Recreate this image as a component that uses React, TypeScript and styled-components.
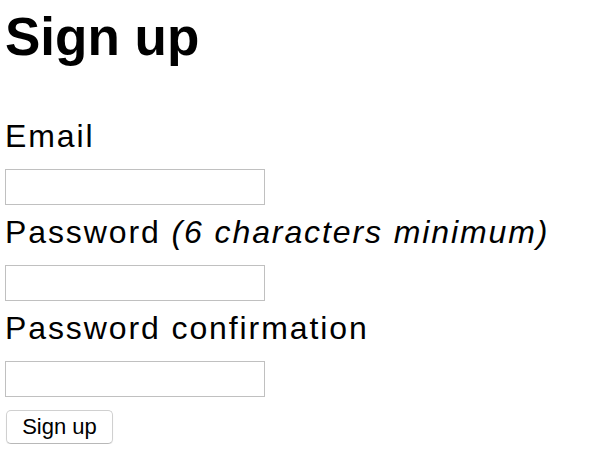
import React from "react";
import styled, { createGlobalStyle } from "styled-components";

const Global = createGlobalStyle`
  html, body { margin: 0; padding: 0; background: #fff; }
  body { font-family: "Liberation Sans", Arial, sans-serif; color: #000; }
`;

const Page = styled.div`
  padding: 10px 0 0 5px;
  display: flex;
  flex-direction: column;
  align-items: flex-start;
`;

const Title = styled.h1`
  margin: 0;
  font-size: 53px;
  line-height: 53px;
  font-weight: bold;
`;

const Form = styled.form`
  margin-top: 53px;
  display: flex;
  flex-direction: column;
  align-items: flex-start;
  gap: 7px;
`;

const Field = styled.div`
  display: flex;
  flex-direction: column;
  align-items: flex-start;
  gap: 13px;
`;

const Label = styled.label`
  font-size: 32px;
  line-height: 40px;
  letter-spacing: 1.9px;
  white-space: nowrap;
`;

const Hint = styled.i`
  font-style: italic;
`;

const Input = styled.input`
  box-sizing: border-box;
  width: 260px;
  height: 36px;
  margin: 0;
  border: 1px solid #c0c0c0;
  background: #fff;
  padding: 0 4px;
  font-size: 20px;
  outline: none;
`;

const Button = styled.button`
  margin-top: 6px;
  box-sizing: border-box;
  width: 107px;
  height: 34px;
  margin-left: 1px;
  border: 1px solid #d0d0d0;
  border-bottom-color: #b8b8b8;
  border-radius: 5px;
  background: #fff;
  box-shadow: 0 1px 1px rgba(0, 0, 0, 0.08);
  font-family: "Liberation Sans", Arial, sans-serif;
  font-size: 22px;
  line-height: 1;
  color: #000;
  padding: 0;
`;

export default function App() {
  return (
    <>
      <Global />
      <Page>
        <Title>Sign up</Title>
        <Form onSubmit={(e) => e.preventDefault()}>
          <Field>
            <Label htmlFor="email">Email</Label>
            <Input id="email" type="email" />
          </Field>
          <Field>
            <Label htmlFor="password">
              Password <Hint>(6 characters minimum)</Hint>
            </Label>
            <Input id="password" type="password" />
          </Field>
          <Field>
            <Label htmlFor="password_confirmation">Password confirmation</Label>
            <Input id="password_confirmation" type="password" />
          </Field>
          <Button type="submit">Sign up</Button>
        </Form>
      </Page>
    </>
  );
}
